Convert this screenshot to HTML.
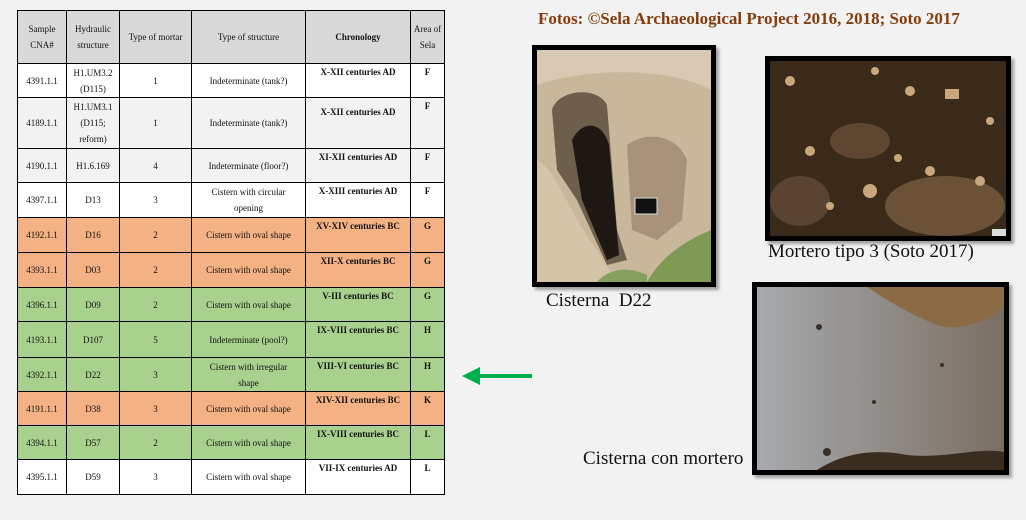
<!DOCTYPE html>
<html><head><style>
body{margin:0;width:1026px;height:520px;background:#f2f2f2;position:relative;overflow:hidden;font-family:"Liberation Serif",serif}
table{position:absolute;left:17px;top:10px;border-collapse:collapse;font-size:9px;color:#111;table-layout:fixed}
td{border:1px solid #000;text-align:center;vertical-align:middle;padding:0 2px;line-height:16px;overflow:hidden}
td.t{padding:0 14px}
td.c{font-weight:bold;vertical-align:top;padding-top:0}
td.a{font-weight:bold;vertical-align:top}
tr.h td{background:#d9d9d9;line-height:16px}
.w{background:#fff}.g{background:#f2f2f2}.o{background:#f4b183}.gr{background:#a9d18e}
.cap{position:absolute;font-size:19px;color:#111;white-space:nowrap}
.fr{position:absolute;border:5px solid #000;box-shadow:3px 3px 3px rgba(0,0,0,.35);overflow:hidden}
</style></head><body>
<table>
<colgroup><col style="width:49px"><col style="width:53px"><col style="width:72px"><col style="width:114px"><col style="width:105px"><col style="width:34px"></colgroup>
<tr class="h" style="height:53px"><td>Sample CNA#</td><td>Hydraulic structure</td><td>Type of mortar</td><td class="t">Type of structure</td><td style="font-weight:bold">Chronology</td><td>Area of Sela</td></tr>
<tr class="w" style="height:34px"><td>4391.1.1</td><td>H1.UM3.2 (D115)</td><td>1</td><td class="t">Indeterminate (tank?)</td><td class="c">X-XII centuries AD</td><td class="a">F</td></tr>
<tr class="g" style="height:51px"><td>4189.1.1</td><td>H1.UM3.1 (D115; reform)</td><td>1</td><td class="t">Indeterminate (tank?)</td><td class="c" style="padding-top:6px">X-XII centuries AD</td><td class="a">F</td></tr>
<tr class="g" style="height:34px"><td>4190.1.1</td><td>H1.6.169</td><td>4</td><td class="t">Indeterminate (floor?)</td><td class="c">XI-XII centuries AD</td><td class="a">F</td></tr>
<tr class="w" style="height:35px"><td>4397.1.1</td><td>D13</td><td>3</td><td class="t">Cistern with circular opening</td><td class="c">X-XIII centuries AD</td><td class="a">F</td></tr>
<tr class="o" style="height:35px"><td>4192.1.1</td><td>D16</td><td>2</td><td class="t">Cistern with oval shape</td><td class="c">XV-XIV centuries BC</td><td class="a">G</td></tr>
<tr class="o" style="height:35px"><td>4393.1.1</td><td>D03</td><td>2</td><td class="t">Cistern with oval shape</td><td class="c">XII-X centuries BC</td><td class="a">G</td></tr>
<tr class="gr" style="height:34px"><td>4396.1.1</td><td>D09</td><td>2</td><td class="t">Cistern with oval shape</td><td class="c">V-III centuries BC</td><td class="a">G</td></tr>
<tr class="gr" style="height:36px"><td>4193.1.1</td><td>D107</td><td>5</td><td class="t">Indeterminate (pool?)</td><td class="c">IX-VIII centuries BC</td><td class="a">H</td></tr>
<tr class="gr" style="height:34px"><td>4392.1.1</td><td>D22</td><td>3</td><td class="t">Cistern with irregular shape</td><td class="c">VIII-VI centuries BC</td><td class="a">H</td></tr>
<tr class="o" style="height:34px"><td>4191.1.1</td><td>D38</td><td>3</td><td class="t">Cistern with oval shape</td><td class="c">XIV-XII centuries BC</td><td class="a">K</td></tr>
<tr class="gr" style="height:34px"><td>4394.1.1</td><td>D57</td><td>2</td><td class="t">Cistern with oval shape</td><td class="c">IX-VIII centuries BC</td><td class="a">L</td></tr>
<tr class="w" style="height:35px"><td>4395.1.1</td><td>D59</td><td>3</td><td class="t">Cistern with oval shape</td><td class="c">VII-IX centuries AD</td><td class="a">L</td></tr>
</table>

<div style="position:absolute;left:538px;top:9px;font-size:17px;font-weight:bold;color:#843c0c;white-space:nowrap">Fotos: ©Sela Archaeological Project 2016, 2018; Soto 2017</div>

<div class="fr" style="left:532px;top:45px;width:174px;height:232px">
<svg width="174" height="232" viewBox="0 0 174 232">
<rect width="174" height="232" fill="#c9b79c"/>
<path d="M0 0H174V40C140 20 60 15 0 35Z" fill="#d8cab2"/>
<path d="M15 60C20 40 60 35 70 55L80 180 90 210 70 215 40 150 20 120Z" fill="#6e5e4c"/>
<path d="M35 90C45 70 65 70 72 95L82 205 70 210 45 150Z" fill="#1e1812"/>
<path d="M90 95C110 80 140 85 150 110L145 170 120 190 95 180Z" fill="#a8927a"/>
<rect x="98" y="148" width="22" height="16" fill="#111" stroke="#ddd"/>
<path d="M0 110C20 120 30 160 60 200L80 232H0Z" fill="#d4c4a8"/>
<path d="M110 232C125 205 150 190 174 180V232Z" fill="#7f9a55"/>
<path d="M60 232C70 220 90 215 110 225V232Z" fill="#86a060"/>
</svg></div>
<div class="cap" style="left:546px;top:290px">Cisterna&nbsp; D22</div>

<div class="fr" style="left:765px;top:56px;width:236px;height:175px">
<svg width="236" height="175" viewBox="0 0 236 175">
<rect width="236" height="175" fill="#3a2a1a"/>
<ellipse cx="90" cy="80" rx="30" ry="18" fill="#5e4630"/>
<ellipse cx="175" cy="145" rx="60" ry="30" fill="#6b5236"/>
<ellipse cx="30" cy="140" rx="30" ry="25" fill="#5a4330"/>
<g fill="#c9a77c"><circle cx="20" cy="20" r="5"/><circle cx="105" cy="10" r="4"/><circle cx="140" cy="30" r="5"/><rect x="175" y="28" width="14" height="10"/><circle cx="40" cy="90" r="5"/><circle cx="128" cy="97" r="4"/><circle cx="160" cy="110" r="5"/><circle cx="100" cy="130" r="7"/><circle cx="210" cy="120" r="5"/><circle cx="60" cy="145" r="4"/><circle cx="220" cy="60" r="4"/></g>
<rect x="222" y="168" width="14" height="7" fill="#ddd"/>
</svg></div>
<div class="cap" style="left:768px;top:241px">Mortero tipo 3 (Soto 2017)</div>

<div class="fr" style="left:752px;top:282px;width:247px;height:183px">
<svg width="247" height="183" viewBox="0 0 247 183">
<defs><linearGradient id="g3" x1="0" y1="0" x2="1" y2="0"><stop offset="0" stop-color="#a6a9ad"/><stop offset=".6" stop-color="#8d8781"/><stop offset="1" stop-color="#7a6e62"/></linearGradient></defs>
<rect width="247" height="183" fill="url(#g3)"/>
<path d="M110 0H247V20C230 35 200 45 180 38 160 30 140 20 110 0Z" fill="#8a6b45"/>
<path d="M60 183C80 170 110 160 150 168 190 172 220 160 247 165V183Z" fill="#3b2c20"/>
<g fill="#3a2e26"><circle cx="62" cy="40" r="3"/><circle cx="185" cy="78" r="2"/><circle cx="117" cy="115" r="2"/><circle cx="70" cy="165" r="4"/></g>
</svg></div>
<div class="cap" style="left:583px;top:448px">Cisterna con mortero</div>

<svg style="position:absolute;left:460px;top:366px" width="74" height="20"><path d="M72 10H18" stroke="#00b050" stroke-width="4"/><path d="M2 10L20 1V19Z" fill="#00b050"/></svg>
</body></html>
